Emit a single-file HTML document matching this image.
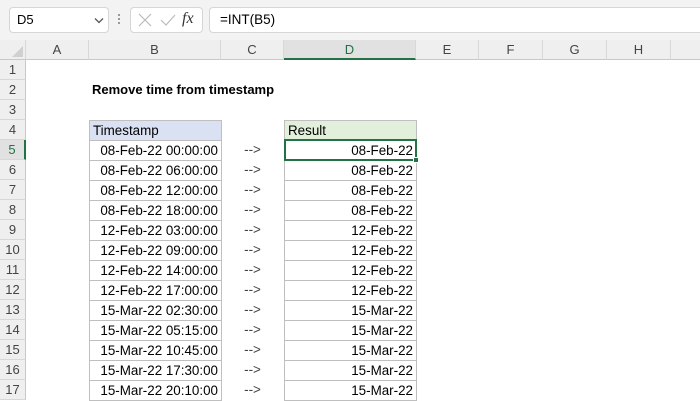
<!DOCTYPE html>
<html><head><meta charset="utf-8"><style>
*{margin:0;padding:0;box-sizing:border-box}
body{width:700px;height:400px;overflow:hidden;background:#fff;font-family:"Liberation Sans",Arial,sans-serif;position:relative;color:#000}
.a{position:absolute}
.box{position:absolute;background:#fff;border:1px solid #d6d6d6;border-radius:4px}
.ch{position:absolute;top:40px;height:20px;background:#efefef;border-right:1px solid #d8d8d8;border-bottom:1px solid #c8c8c8;text-align:center;font-size:13px;line-height:19px;color:#444}
.rh{position:absolute;left:0;width:26px;height:20px;background:#efefef;border-right:1px solid #c8c8c8;border-bottom:1px solid #d8d8d8;text-align:center;font-size:13px;line-height:20px;color:#444}
.c{position:absolute;height:21px;font-size:13.4px;line-height:20px;padding:0 3px;white-space:nowrap}
.bb{border:1px solid #bfbfbf}
</style></head><body>
<div class="a" style="left:0;top:0;width:700px;height:40px;background:#f3f3f3"></div>
<div class="box" style="left:9px;top:7px;width:100px;height:26px"><span class="a" style="left:7px;top:4px;font-size:13px">D5</span>
<svg class="a" style="left:84px;top:9px" width="10" height="7"><path d="M1 1.5L5 5.5L9 1.5" stroke="#555" fill="none" stroke-width="1.3"/></svg></div>
<div class="a" style="left:118px;top:14px;width:2px;height:2px;background:#999;box-shadow:0 4px #999,0 8px #999"></div>
<div class="box" style="left:130px;top:7px;width:73px;height:26px">
<svg class="a" style="left:7px;top:5px" width="14" height="14"><path d="M1 1L13 13M13 1L1 13" stroke="#bbb" stroke-width="1.2"/></svg>
<svg class="a" style="left:29px;top:6px" width="16" height="12"><path d="M1 6L6 11L15 1" stroke="#bbb" fill="none" stroke-width="1.2"/></svg>
<span class="a" style="left:51px;top:2px;font-family:'Liberation Serif',serif;font-style:italic;font-size:16px;color:#333">fx</span></div>
<div class="box" style="left:209px;top:7px;width:500px;height:26px"><span class="a" style="left:10px;top:4px;font-size:13.5px">=INT(B5)</span></div>

<div class="ch" style="left:0;width:26px"></div>
<svg class="a" style="left:12px;top:46px" width="12" height="12"><path d="M11 0L11 11L0 11Z" fill="#d0d0d0"/></svg>
<div class="ch" style="left:26px;width:63px">A</div>
<div class="ch" style="left:89px;width:132px">B</div>
<div class="ch" style="left:221px;width:63px">C</div>
<div class="ch" style="left:284px;width:132px;background:#e1e1e1;border-bottom:2px solid #217346;color:#217346">D</div>
<div class="ch" style="left:416px;width:63px">E</div>
<div class="ch" style="left:479px;width:64px">F</div>
<div class="ch" style="left:543px;width:64px">G</div>
<div class="ch" style="left:607px;width:64px">H</div>
<div class="ch" style="left:671px;width:40px"></div>

<div class="rh" style="top:60px">1</div><div class="rh" style="top:80px">2</div><div class="rh" style="top:100px">3</div><div class="rh" style="top:120px">4</div>
<div class="rh" style="top:140px;background:#e1e1e1;border-right:2px solid #217346;color:#217346">5</div>
<div class="rh" style="top:160px">6</div><div class="rh" style="top:180px">7</div><div class="rh" style="top:200px">8</div><div class="rh" style="top:220px">9</div><div class="rh" style="top:240px">10</div><div class="rh" style="top:260px">11</div><div class="rh" style="top:280px">12</div><div class="rh" style="top:300px">13</div><div class="rh" style="top:320px">14</div><div class="rh" style="top:340px">15</div><div class="rh" style="top:360px">16</div><div class="rh" style="top:380px">17</div>

<div class="c" style="left:89px;top:80px;font-weight:bold;font-size:13px">Remove time from timestamp</div>
<div class="c bb" style="left:89px;top:120px;width:133px;background:#d9e1f2">Timestamp</div>
<div class="c bb" style="left:284px;top:120px;width:133px;background:#e2efda">Result</div>

<div id="rows"></div>
<script>
var ts=["08-Feb-22 00:00:00","08-Feb-22 06:00:00","08-Feb-22 12:00:00","08-Feb-22 18:00:00","12-Feb-22 03:00:00","12-Feb-22 09:00:00","12-Feb-22 14:00:00","12-Feb-22 17:00:00","15-Mar-22 02:30:00","15-Mar-22 05:15:00","15-Mar-22 10:45:00","15-Mar-22 17:30:00","15-Mar-22 20:10:00"];
var h="";
ts.forEach(function(t,i){var y=140+i*20;
h+='<div class="c bb" style="left:89px;top:'+y+'px;width:133px;text-align:right">'+t+'</div>';
h+='<div class="c" style="left:221px;top:'+y+'px;width:63px;text-align:center;color:#444">--&gt;</div>';
h+='<div class="c bb" style="left:284px;top:'+y+'px;width:133px;text-align:right">'+t.slice(0,9)+'</div>';});
document.getElementById("rows").innerHTML=h;
</script>
<div class="a" style="left:284px;top:139px;width:133px;height:22px;border:2px solid #217346"></div>
<div class="a" style="left:413px;top:157px;width:6px;height:6px;background:#217346;border:1px solid #fff"></div>
</body></html>
